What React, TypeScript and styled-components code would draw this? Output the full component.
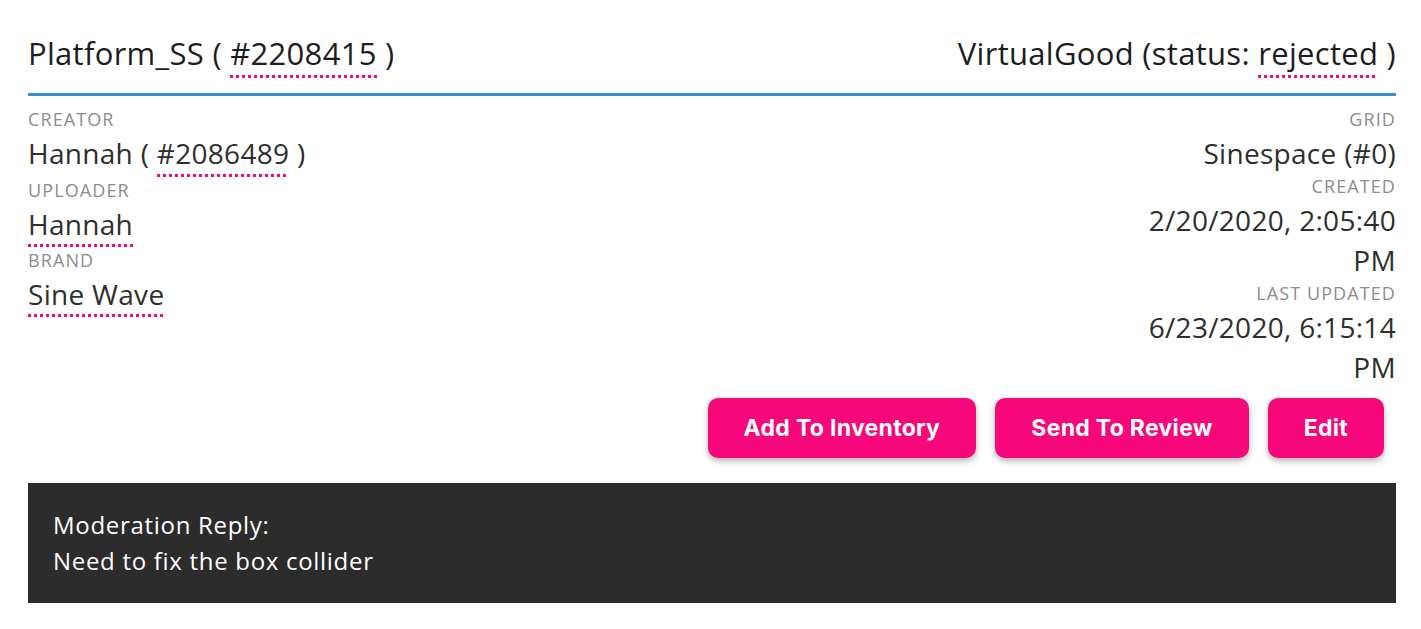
import styled, { createGlobalStyle } from 'styled-components';

const pink = '#f6087a';

const GlobalStyle = createGlobalStyle`
  body {
    margin: 0;
    background: #fff;
    font-family: "Open Sans", "Liberation Sans", sans-serif;
    color: #2e2e2e;
  }
`;

const Page = styled.div`
  padding: 30px 25px 20px 28px;
`;

const Header = styled.header`
  display: flex;
  justify-content: space-between;
  align-items: baseline;
  font-size: 31px;
  line-height: 46px;
  letter-spacing: 0.3px;
  color: #1d1d1d;
  padding-bottom: 15px;
  border-bottom: 3px solid #3b8bd0;
`;

// dotted pink underline used for linked ids / values
const Link = styled.span`
  display: inline-block;
  line-height: 1.3;
  padding-bottom: 5px;
  background: repeating-linear-gradient(to right, ${pink} 0 3px, transparent 3px 6px) left bottom / 100% 3px no-repeat;
  cursor: pointer;
`;

const Info = styled.section`
  display: flex;
  justify-content: space-between;
  align-items: flex-start;
  padding-top: 10px;
`;

const Column = styled.div<{ $align: 'left' | 'right' }>`
  text-align: ${(p) => p.$align};
  width: ${(p) => (p.$align === 'right' ? '270px' : 'auto')};
`;

const Label = styled.div`
  font-size: 18px;
  line-height: 27px;
  letter-spacing: 1.1px;
  color: #8c8c8c;
  text-transform: uppercase;
`;

const Value = styled.div`
  font-size: 28px;
  line-height: 40px;
  letter-spacing: 0.3px;
  color: #2e2e2e;
`;

const Actions = styled.div`
  display: flex;
  justify-content: flex-end;
  gap: 19px;
  padding-right: 12px;
  margin-top: 11px;
`;

const Button = styled.button`
  height: 60px;
  padding: 0 36px;
  border: 0;
  border-radius: 10px;
  background: ${pink};
  color: #fff;
  font-family: Inter, "Liberation Sans", sans-serif;
  font-weight: 700;
  font-size: 23px;
  letter-spacing: 0.3px;
  box-shadow: 0 3px 6px rgba(0, 0, 0, 0.3);
  cursor: pointer;
`;

const Reply = styled.div`
  margin-top: 25px;
  padding: 24px 25px;
  background: #2c2c2c;
  color: #fff;
  font-size: 24px;
  line-height: 36px;
  letter-spacing: 0.7px;
`;

export default function App() {
  return (
    <>
      <GlobalStyle />
      <Page>
        <Header>
          <div>
            Platform_SS ( <Link>#2208415</Link> )
          </div>
          <div>
            VirtualGood (status: <Link>rejected</Link> )
          </div>
        </Header>
        <Info>
          <Column $align="left">
            <Label>Creator</Label>
            <Value>
              Hannah ( <Link>#2086489</Link> )
            </Value>
            <Label>Uploader</Label>
            <Value>
              <Link>Hannah</Link>
            </Value>
            <Label>Brand</Label>
            <Value>
              <Link>Sine Wave</Link>
            </Value>
          </Column>
          <Column $align="right">
            <Label>Grid</Label>
            <Value>Sinespace (#0)</Value>
            <Label>Created</Label>
            <Value>2/20/2020, 2:05:40 PM</Value>
            <Label>Last Updated</Label>
            <Value>6/23/2020, 6:15:14 PM</Value>
          </Column>
        </Info>
        <Actions>
          <Button>Add To Inventory</Button>
          <Button>Send To Review</Button>
          <Button>Edit</Button>
        </Actions>
        <Reply>
          <div>Moderation Reply:</div>
          <div>Need to fix the box collider</div>
        </Reply>
      </Page>
    </>
  );
}
